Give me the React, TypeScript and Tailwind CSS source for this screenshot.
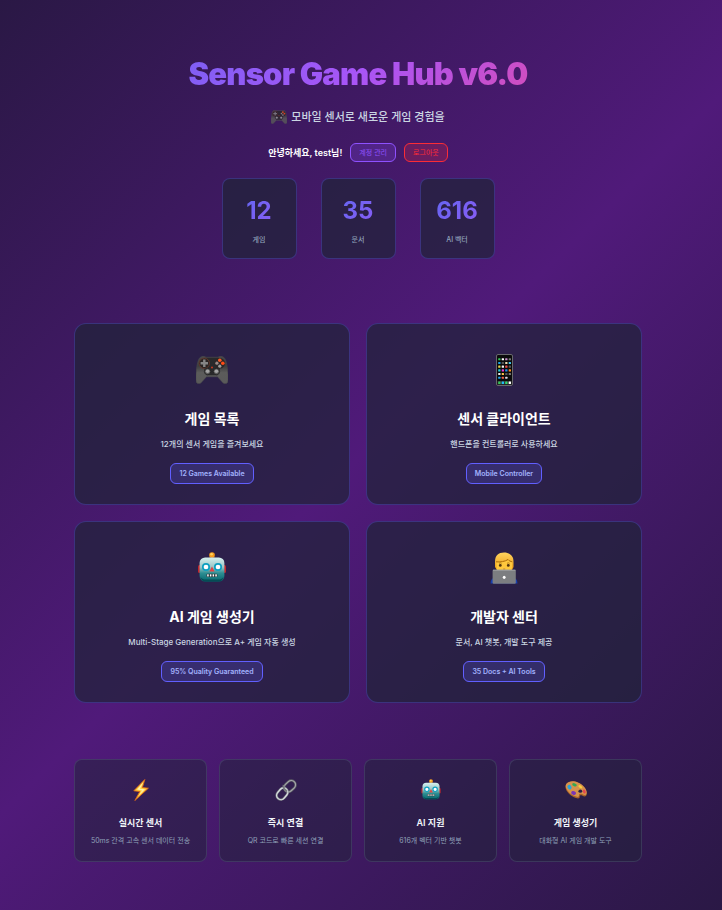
import React from "react";

function Gamepad({ className }: { className: string }) {
  return (
    <svg viewBox="0 0 32 28" className={className} aria-hidden="true">
      <defs>
        <linearGradient id="padBody" x1="0" y1="0" x2="0" y2="1">
          <stop offset="0" stopColor="#4a4a4c" />
          <stop offset="0.35" stopColor="#3c3c3d" />
          <stop offset="0.6" stopColor="#5c5c5b" />
          <stop offset="1" stopColor="#5a5a5a" />
        </linearGradient>
      </defs>
      <path d="M4.500 1.200C6.500 0 8.500.2 10 1.200h12c1.500-1 3.500-1.200 5.500 0 2 1.200 3.200 5.500 3.900 11 .6 5 1 10 .3 13.800-.3 1.600-3.200 2.100-4.600.9L21.500 20.800h-11L4.900 26.900c-1.400 1.200-4.300.7-4.600-.9C-.4 22.200 0 17.200.6 12.200c.7-5.500 1.900-9.800 3.900-11z" fill="url(#padBody)" stroke="#4c4c4c" strokeWidth=".5" />
      <path d="M9 1.800h14l2 8-3.500 9.500h-11L7 9.800z" fill="#29292b" />
      <circle cx="8.300" cy="7.300" r="5.200" fill="#2a2524" stroke="#6b3a2c" strokeWidth=".8" />
      <path d="M7.100 3.600h2.400v2.500H12v2.400H9.500V11H7.100V8.500H4.600V6.100h2.500z" fill="#858585" />
      <circle cx="23.800" cy="7.300" r="5.200" fill="#2b2728" />
      <circle cx="23.800" cy="4.200" r="1.800" fill="#ff5a24" />
      <circle cx="26.800" cy="7.200" r="1.800" fill="#ff4b16" />
      <circle cx="20.900" cy="7.200" r="1.600" fill="#9b8a86" />
      <circle cx="23.800" cy="10.200" r="1.600" fill="#a09c9a" />
      <circle cx="16" cy="11.500" r="1" fill="#c93a20" />
      <circle cx="11.600" cy="15.500" r="3.200" fill="#5e5e5e" stroke="#1c1c1c" strokeWidth=".8" />
      <circle cx="11.600" cy="15.200" r="1.800" fill="#a5a5a5" />
      <circle cx="20.400" cy="15.500" r="3.200" fill="#5e5e5e" stroke="#1c1c1c" strokeWidth=".8" />
      <circle cx="20.400" cy="15.200" r="1.800" fill="#a5a5a5" />
    </svg>
  );
}

const APP_COLORS = [
  ["#34c759", "#ffffff", "#c98fd0", "#777777"],
  ["#1ea7f0", "#555555", "#e8d8b0", "#40c8f5"],
  ["#e6d54a", "#f4f4f4", "#f0504a", "#555555"],
  ["#20cfe0", "#e83ad0", "#1b8ff0", "#ff8a1e"],
  ["#f0f0f0", "#ffc54a", "#555555", "#777777"],
  ["#1ea7f0", "#f0604a", "#d8d8e8", "#0b0b0c"],
];

function Phone({ className }: { className: string }) {
  return (
    <svg viewBox="0 0 17 32" className={className} aria-hidden="true">
      <rect x=".5" y=".5" width="16" height="31" rx="1.500" fill="#0b0b0c" stroke="#68686c" />
      {APP_COLORS.map((row, y) =>
        row.map((c, x) => (
          <rect key={`${x}-${y}`} x={2.2 + x * 3.5} y={4.2 + y * 3.7} width="2.300" height="2.100" rx=".5" fill={c} />
        )),
      )}
      <rect x="1.500" y="27" width="14" height="3.600" fill="#37383c" />
      {["#34c759", "#1ec0f5", "#2fd86a", "#ffffff"].map((c, x) => (
        <rect key={c} x={2.2 + x * 3.5} y="27.600" width="2.300" height="2.300" rx=".5" fill={c} />
      ))}
    </svg>
  );
}

function Robot({ className }: { className: string }) {
  return (
    <svg viewBox="0 0 28 32" className={className} aria-hidden="true">
      <defs>
        <linearGradient id="robotHead" x1="0" y1="0" x2="0" y2="1">
          <stop offset="0" stopColor="#d6f1ef" />
          <stop offset="0.4" stopColor="#9cc5c5" />
          <stop offset="0.65" stopColor="#2d8e92" />
          <stop offset="1" stopColor="#05666e" />
        </linearGradient>
      </defs>
      <rect x="0" y="13" width="4" height="8" rx="1.500" fill="#c4262c" />
      <rect x="24" y="13" width="4" height="8" rx="1.500" fill="#c4262c" />
      <path d="M11.500 4h5l.8 2.800h-6.600z" fill="#63443f" />
      <circle cx="14" cy="3" r="2.800" fill="#f69c1d" />
      <circle cx="13.600" cy="2.300" r="1.300" fill="#ffd15c" />
      <rect x="1.600" y="5.500" width="24.800" height="24" rx="5.500" fill="url(#robotHead)" />
      <path d="M2.500 25c.8 3 2.800 4.500 5 4.500h13c2.200 0 4.200-1.500 5-4.500-1.500 2-3 2.600-5 2.600h-13c-2 0-3.500-.6-5-2.600z" fill="#054c54" />
      <circle cx="8" cy="15" r="3.200" fill="#fff" stroke="#0c9fc0" strokeWidth="1.700" />
      <circle cx="20" cy="15" r="3.200" fill="#fff" stroke="#0c9fc0" strokeWidth="1.700" />
      <path d="M14 14.500l2.600 5h-5.200z" fill="#e04444" />
      <rect x="8.500" y="21.800" width="11" height="3.200" rx="1" fill="#26383a" />
      {[9.2, 11.9, 14.6, 17.3].map((x) => (
        <rect key={x} x={x} y="22.300" width="1.500" height="2.200" fill="#fff" />
      ))}
    </svg>
  );
}

function Developer({ className }: { className: string }) {
  return (
    <svg viewBox="0 0 28 32" className={className} aria-hidden="true">
      <defs>
        <linearGradient id="devHair" x1="0" y1="0" x2="0" y2="1">
          <stop offset="0" stopColor="#ffd45e" />
          <stop offset="1" stopColor="#e99a12" />
        </linearGradient>
      </defs>
      <path d="M.5 31.500c.2-4 2-6 5-6.500h17c3 .5 4.800 2.500 5 6.500z" fill="#173fae" />
      <path d="M5 15V9.500C5 3.500 8.500.5 14 .5s9.500 3 9.500 9V15l-1.500 3h-15z" fill="url(#devHair)" />
      <path d="M6.500 10c3.500.2 8-.4 11.500-2 1 1.300 2.600 2 4 2.200v5c0 4.500-3.600 8-7.800 8s-7.700-3.500-7.700-8z" fill="#ffc83d" />
      <path d="M6 9.800c4 .5 9-.2 12-2.300 1 1.300 2.600 2 4.300 2.300" fill="none" stroke="#ae6e0b" strokeWidth="1" />
      <circle cx="10.300" cy="13.400" r="1.400" fill="#51330f" />
      <circle cx="18.300" cy="13.400" r="1.400" fill="#51330f" />
      <path d="M9 11.300q1.400-.8 2.600 0M17 11.300q1.400-.8 2.600 0" stroke="#9b6410" strokeWidth=".7" fill="none" />
      <path d="M13.200 17h2" stroke="#b5742a" strokeWidth=".8" />
      <rect x="2.600" y="17.800" width="23.200" height="13.900" rx="1" fill="#7c7e81" />
      <path d="M3 18.200h22.400" stroke="#a9abad" strokeWidth=".8" />
      <ellipse cx="14.200" cy="25.300" rx="1.400" ry="1.600" fill="#fff" />
    </svg>
  );
}

function Bolt({ className }: { className: string }) {
  return (
    <svg viewBox="0 0 16 22" className={className} aria-hidden="true">
      <path d="M11.800.5L.8 11.800l6 .8-5 9 13.600-12.400-6-.7z" fill="#ffcc3c" stroke="#d9641a" strokeWidth=".9" strokeLinejoin="round" />
      <path d="M10.500 3L4 10.600l5 .8-3.500 5.400 6.500-6.600-5-.5z" fill="#fff1a8" />
    </svg>
  );
}

function Chain({ className }: { className: string }) {
  return (
    <svg viewBox="0 0 22 22" className={className} aria-hidden="true">
      <g fill="none">
        <rect x="-4.300" y="-6.300" width="8.600" height="12.600" rx="4.300" transform="translate(14.800 7.200) rotate(48)" stroke="#5e6066" strokeWidth="2.400" />
        <rect x="-4.300" y="-6.300" width="8.600" height="12.600" rx="4.300" transform="translate(14.800 7.200) rotate(48)" stroke="#a3a5aa" strokeWidth="1.100" />
        <rect x="-4.300" y="-6.300" width="8.600" height="12.600" rx="4.300" transform="translate(7.200 14.800) rotate(40)" stroke="#777b80" strokeWidth="2.400" />
        <rect x="-4.300" y="-6.300" width="8.600" height="12.600" rx="4.300" transform="translate(7.200 14.800) rotate(40)" stroke="#d7dce0" strokeWidth="1.300" />
        <path d="M8.600 6c-.4 2.500 1 5 3.500 6.200" stroke="#777a80" strokeWidth="2" />
      </g>
    </svg>
  );
}

function Palette({ className }: { className: string }) {
  return (
    <svg viewBox="0 0 22 18" className={className} aria-hidden="true">
      <path d="M1.200 3.200C3.500.2 8.500-.2 13.500 2c5.200 2.300 9.200 7.500 8.200 11.600-.5 2.300-2.600 2-4.200 1.200-1.600-.8-3-.5-2.800 1 .2 1.700-1.600 2-3.700 1.200C5.500 15 2 11.500.8 7.800.2 6 .3 4.400 1.200 3.200z" fill="#a9622a" />
      <path d="M1.400 2.800C3.700 0 8.500-.5 13.500 1.700c5 2.200 8.900 7 8 10.700-.5 2-2.500 1.700-4 .9-2-1-3.800-.4-3.500 1.300.2 1.400-1.200 1.600-3 1C5.700 13.700 2.400 10.500 1.100 7 .6 5.400.6 3.900 1.400 2.800z" fill="#d6934c" />
      <ellipse cx="15.300" cy="10.200" rx="1.900" ry="1.600" fill="#2b2047" />
      <ellipse cx="4.500" cy="6.200" rx="1.900" ry="2.400" fill="#28a4dc" transform="rotate(-35 4.500 6.200)" />
      <ellipse cx="9.500" cy="3.800" rx="2.400" ry="1.500" fill="#35a853" transform="rotate(20 9.500 3.800)" />
      <ellipse cx="15.300" cy="5.800" rx="2.200" ry="1.300" fill="#f5cf3c" transform="rotate(35 15.300 5.800)" />
      <ellipse cx="19.300" cy="10.500" rx="1.400" ry="2" fill="#e5484d" transform="rotate(-20 19.300 10.500)" />
      <ellipse cx="8.600" cy="12" rx="2.500" ry="1.800" fill="#7b35b5" transform="rotate(20 8.600 12)" />
    </svg>
  );
}

const STATS = [
  { value: "12", label: "게임" },
  { value: "35", label: "문서" },
  { value: "616", label: "AI 벡터" },
];

const CARDS = [
  { icon: <Gamepad className="h-7 w-8" />, title: "게임 목록", text: "12개의 센서 게임을 즐겨보세요", badge: "12 Games Available" },
  { icon: <Phone className="h-8 w-[17px]" />, title: "센서 클라이언트", text: "핸드폰을 컨트롤러로 사용하세요", badge: "Mobile Controller" },
  { icon: <Robot className="h-8 w-7" />, title: "AI 게임 생성기", text: "Multi-Stage Generation으로 A+ 게임 자동 생성", badge: "95% Quality Guaranteed" },
  { icon: <Developer className="h-8 w-7" />, title: "개발자 센터", text: "문서, AI 챗봇, 개발 도구 제공", badge: "35 Docs + AI Tools" },
];

const FEATURES = [
  { icon: <Bolt className="h-[22px] w-4" />, title: "실시간 센서", text: "50ms 간격 고속 센서 데이터 전송" },
  { icon: <Chain className="size-[22px]" />, title: "즉시 연결", text: "QR 코드로 빠른 세션 연결" },
  { icon: <Robot className="h-[22px] w-5" />, title: "AI 지원", text: "616개 벡터 기반 챗봇" },
  { icon: <Palette className="h-[18px] w-[22px]" />, title: "게임 생성기", text: "대화형 AI 게임 개발 도구" },
];

export default function App() {
  return (
    <div className="min-h-screen bg-[linear-gradient(135deg,#2a1845_0%,#501a7a_50%,#2a1845_100%)] pt-12 pr-[26px] pb-12 pl-5 font-['Inter','Noto_Sans_CJK_KR',sans-serif] text-white">
      <main className="mx-auto max-w-[568px]">
        <header className="flex flex-col items-center">
          <h1 className="w-full bg-[linear-gradient(135deg,#6366f1_0%,#a855f7_50%,#ec4899_100%)] bg-clip-text text-center text-[31px] leading-[52px] font-black tracking-tight whitespace-nowrap text-transparent">
            Sensor Game Hub v6.0
          </h1>
          <p className="mt-[5px] flex items-center gap-1 text-[11px] leading-6 font-medium text-slate-300">
            <Gamepad className="h-[14px] w-4 opacity-80" />
            모바일 센서로 새로운 게임 경험을
          </p>
          <div className="mt-[14px] flex items-center gap-2">
            <span className="text-[9px] leading-4 font-semibold">안녕하세요, test님!</span>
            <button className="h-[19px] rounded-md border border-violet-500 bg-violet-500/20 px-2 text-[7px] leading-3 text-violet-500">계정 관리</button>
            <button className="h-[19px] rounded-md border border-red-500 bg-red-500/20 px-2 text-[7px] leading-3 text-red-500">로그아웃</button>
          </div>
          <dl className="mt-4 flex gap-6">
            {STATS.map((s) => (
              <div key={s.label} className="flex w-[75px] flex-col-reverse items-center rounded-lg border border-indigo-500/30 bg-[#1f2438]/70 pt-[14px] pb-3">
                <dt className="mt-[5px] text-[7px] leading-3 font-medium text-slate-400">{s.label}</dt>
                <dd className="bg-[linear-gradient(135deg,#6366f1,#8b5cf6)] bg-clip-text text-[24px] leading-9 font-bold text-transparent">{s.value}</dd>
              </div>
            ))}
          </dl>
        </header>

        <section className="mt-16 grid grid-cols-2 gap-4">
          {CARDS.map((c) => (
            <a key={c.title} href="#" className="flex flex-col items-center rounded-xl border border-indigo-500/30 bg-[#1f2438]/70 px-4 pt-6 pb-5">
              <span className="flex h-11 items-center">{c.icon}</span>
              <h2 className="mt-[15px] text-[14px] leading-6 font-bold">{c.title}</h2>
              <p className="mt-[3px] text-[8px] leading-5 font-medium text-slate-300">{c.text}</p>
              <span className="mt-[9px] rounded-md border border-indigo-500 bg-indigo-500/20 px-2 text-[7px] leading-[19px] font-semibold text-indigo-300">{c.badge}</span>
            </a>
          ))}
        </section>

        <section className="mt-14 grid grid-cols-4 gap-3">
          {FEATURES.map((f) => (
            <article key={f.title} className="flex flex-col items-center rounded-lg border border-slate-500/30 bg-[#1f2438]/50 px-2 pt-4 pb-[14px]">
              <span className="flex h-7 items-center">{f.icon}</span>
              <h3 className="mt-[11px] text-[9px] leading-4 font-semibold text-slate-100">{f.title}</h3>
              <p className="mt-1 text-[7px] leading-3 whitespace-nowrap text-slate-400">{f.text}</p>
            </article>
          ))}
        </section>
      </main>
    </div>
  );
}
